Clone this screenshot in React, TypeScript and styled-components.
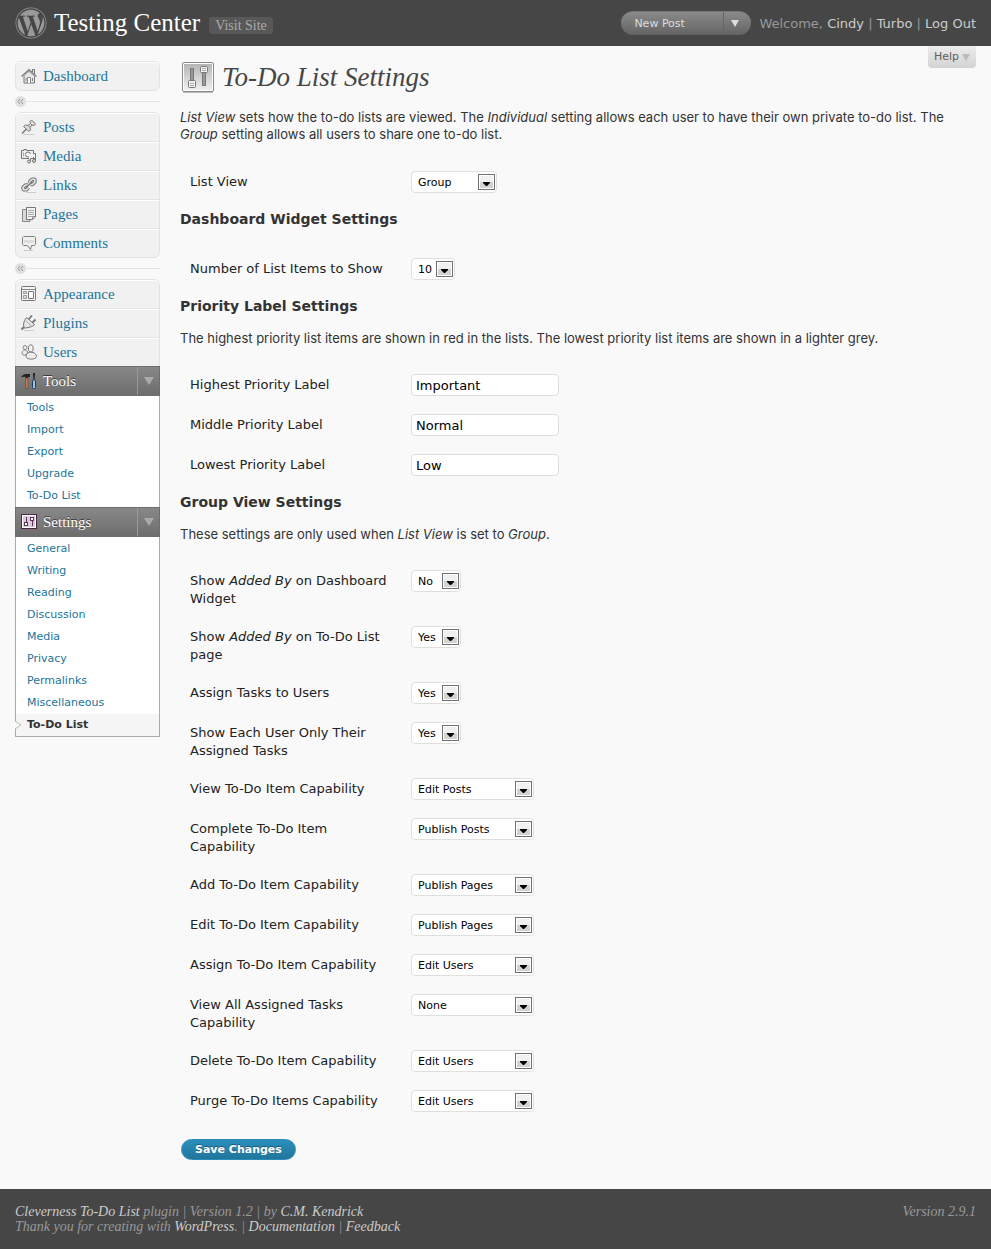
import React, { useId } from "react";
import type { ReactNode } from "react";
import styled, { createGlobalStyle } from "styled-components";
import { FaWordpress } from "react-icons/fa";

const sans = `Verdana, "DejaVu Sans", sans-serif`;
const proseSans = `Inter, "DejaVu Sans", sans-serif`;
const serif = `Georgia, "Liberation Serif", serif`;

const GlobalStyle = createGlobalStyle`
  * { box-sizing: border-box; }
  body { margin: 0; background: #f9f9f9; color: #333; font: 13px/18px ${sans}; }
  a { text-decoration: none; }
  ul { list-style: none; margin: 0; padding: 0; }
`;

/* ---------- Header ---------- */

const Header = styled.header`
  display: flex;
  align-items: center;
  height: 46px;
  padding: 0 15px;
  background: #464646;
`;
const Logo = styled(FaWordpress)`
  flex: none;
  width: 32px;
  height: 32px;
  color: #999;
`;
const SiteTitle = styled.h1`
  margin: 0 9px 0 7px;
  font: 25px/30px ${serif};
  white-space: nowrap;
  a { color: #fff; }
`;
const VisitLink = styled.a`
  margin-top: 4px;
  padding: 0 6px;
  border-radius: 3px;
  background: #585858;
  color: #aaa;
  font: 14px/17px ${serif};
  white-space: nowrap;
`;
const Shortcut = styled.div`
  display: flex;
  flex: none;
  margin-left: auto;
  width: 130px;
  height: 24px;
  border-top: 1px solid #777;
  border-radius: 12px;
  overflow: hidden;
  background: linear-gradient(#8a8a8a, #636363);
`;
const ShortcutLink = styled.a`
  flex: 1;
  padding-left: 13px;
  color: #ddd;
  font-size: 11px;
  line-height: 23px;
`;
const ShortcutToggle = styled.button`
  width: 28px;
  padding: 0 6px 0 0;
  border: 0;
  border-left: 1px solid #666;
  background: none;
  line-height: 0;
`;
const UserInfo = styled.p`
  margin: 1px 0 0 8px;
  color: #999;
  white-space: nowrap;
  a { color: #ccc; }
`;

/* ---------- Sidebar ---------- */

const Body = styled.div`
  display: flex;
  align-items: flex-start;
  gap: 20px;
  padding: 0 15px;
`;
const Sidebar = styled.nav`
  flex: 0 0 145px;
  padding-top: 15px;
`;
const MenuGroup = styled.ul`
  border: 1px solid #e3e3e3;
  border-radius: 6px;
  background: #f1f1f1;
`;
const MenuItem = styled.li`
  & + & { border-top: 1px solid #e3e3e3; }
`;
const MenuLink = styled.a`
  display: flex;
  align-items: center;
  gap: 6px;
  height: 28px;
  padding-left: 5px;
  box-shadow: inset 0 1px 0 #fff;
  border-radius: 5px 5px 0 0;
  color: #21759b;
  font: 15px/28px ${serif};
  ${MenuItem} + ${MenuItem} > & { border-radius: 0; }
`;
const OpenItem = styled.li`
  margin: 0 -1px;
  &:last-child { margin-bottom: -1px; }
`;
const OpenHead = styled.div`
  display: flex;
  height: 30px;
  border: 1px solid #6d6d6d;
  background: linear-gradient(#888, #6d6d6d);
`;
const OpenLink = styled.a`
  display: flex;
  flex: 1;
  align-items: center;
  gap: 6px;
  padding-left: 5px;
  color: #fff;
  font: 15px/28px ${serif};
  text-shadow: 0 -1px 0 #333;
`;
const FoldButton = styled.button`
  width: 22px;
  padding: 0;
  border: 0;
  border-left: 1px solid #999;
  background: none;
  line-height: 0;
`;
const SubMenu = styled.ul`
  padding-top: 1px;
  border: solid #aaa;
  border-width: 0 1px;
  background: #fff;
  ${OpenItem}:last-child > & { border-bottom-width: 1px; }
`;
const SubItem = styled.li<{ $current?: boolean }>`
  position: relative;
  background: ${(p) => (p.$current ? "#f5f5f5" : "none")};
  a {
    display: block;
    padding-left: 11px;
    color: ${(p) => (p.$current ? "#333" : "#21759b")};
    font-size: 11px;
    font-weight: ${(p) => (p.$current ? "bold" : "normal")};
    line-height: 22px;
  }
`;
const CurrentMark = styled.svg`
  position: absolute;
  left: -1px;
  top: 6px;
`;
const SeparatorRow = styled.div`
  display: flex;
  align-items: center;
  height: 21px;
  &::after { content: ""; flex: 1; border-top: 1px solid #e3e3e3; }
`;
const CollapseButton = styled.button`
  width: 11px;
  height: 11px;
  padding: 0;
  border: 0;
  border-radius: 50%;
  background: #e0e0e0;
  line-height: 0;
`;

/* ---------- Content ---------- */

const Content = styled.main`
  flex: 1;
  min-width: 0;
  padding-bottom: 29px;
`;
const HelpTab = styled.button`
  display: flex;
  align-items: center;
  gap: 3px;
  height: 22px;
  margin-left: auto;
  padding: 0 6px;
  border: 0;
  border-radius: 0 0 4px 4px;
  background: linear-gradient(#ececec, #d3d3d3);
  color: #606060;
  font: 11px/22px ${sans};
`;
const TitleRow = styled.div`
  display: flex;
  align-items: center;
  gap: 8px;
  margin: -8px 0 14px 2px;
`;
const PageTitle = styled.h2`
  margin: 0;
  color: #464646;
  font: italic 27px/35px ${serif};
`;
const Intro = styled.p`
  margin: 0 0 19px;
  font-family: ${proseSans};
  line-height: 17px;
`;
const SectionTitle = styled.h3`
  margin: 7px 0 0;
  font-size: 14px;
  line-height: 20px;
`;
const Note = styled.p`
  margin: 13px 0 0;
  font-family: ${proseSans};
`;
const Fields = styled.div<{ $gap: number }>`
  margin-top: ${(p) => p.$gap}px;
`;
const FieldRow = styled.div`
  display: grid;
  grid-template-columns: 221px 1fr;
  column-gap: 10px;
  align-items: start;
  min-height: 40px;
`;
const FieldLabel = styled.label`
  padding: 11px 10px 9px;
  color: #222;
`;
const TextInput = styled.input`
  width: 148px;
  height: 22px;
  margin-top: 9px;
  padding: 0 4px;
  border: 1px solid #dfdfdf;
  border-radius: 4px;
  background: #fff;
  color: #000;
  font: 13px/18px ${sans};
`;
const SelectBox = styled.div<{ $width: number }>`
  position: relative;
  width: ${(p) => p.$width}px;
  height: 22px;
  margin-top: 9px;
`;
const NativeSelect = styled.select`
  display: block;
  appearance: none;
  width: 100%;
  height: 100%;
  padding: 1px 0 0 6px;
  border: 1px solid #dfdfdf;
  border-radius: 4px;
  background: #fff;
  color: #000;
  font: 11px/19px ${sans};
`;
const SelectArrow = styled.svg`
  position: absolute;
  top: 3px;
  right: 2px;
  pointer-events: none;
`;
const SaveButton = styled.button`
  display: block;
  height: 21px;
  margin: 18px 0 0 1px;
  padding: 0 13px;
  border: 1px solid #298cba;
  border-radius: 11px;
  background: linear-gradient(#2a8fbd, #21759b);
  color: #fff;
  font: bold 11px/19px ${sans};
  text-shadow: 0 -1px 0 #1a5a78;
`;

/* ---------- Footer ---------- */

const Footer = styled.footer`
  display: flex;
  justify-content: space-between;
  min-height: 60px;
  padding: 15px 15px 0;
  background: #464646;
  color: #999;
  font: italic 14px/15px ${serif};
  p { margin: 0; }
  a { color: #ccc; }
`;

/* ---------- Icons ---------- */

const iconShapes: Record<string, ReactNode> = {
  dashboard: (
    <>
      <path d="M3 8V15H13.500V8L8 3Z" fill="#e8e8e8" stroke="#777" />
      <path d="M.5 8.500 8 1.500 15.500 8.500" fill="none" stroke="#777" strokeWidth="1.200" />
      <path d="M2.500 8.500 8 3.500 13.500 8.500" fill="none" stroke="#bbb" />
      <path d="M11.500 4V1.500H13.500V6" fill="#ddd" stroke="#777" />
      <path d="M6.500 15V9.500H9.500V15M5 10V13M11.500 10V13" fill="#fff" stroke="#888" />
    </>
  ),
  posts: (
    <>
      <path d="M2 15.500H13" stroke="#ccc" />
      <path d="M1 14.500 6 9.500" stroke="#777" strokeWidth="1.500" />
      <path d="M2.500 7.500 4.500 6 7 6.500 9.500 4.500 9 2.500 10.500 1 14.500 5 13 6.500 11 6 9 8.500 9.500 11 8 12.500Z" fill="#ddd" stroke="#777" />
      <path d="M7 6.500 9 8.500M9.500 4.500 11 6" stroke="#888" />
    </>
  ),
  media: (
    <>
      <path d="M.5 2.500H3V1.500H5.500V2.500H12.500V10.500H.5Z" fill="#eee" stroke="#777" />
      <circle cx="7" cy="6.500" r="2.500" fill="#fff" stroke="#777" />
      <path d="M2.500 4.500V8.500" stroke="#aaa" />
      <path d="M9.500 14V7.500H14.500V13" fill="none" stroke="#f1f1f1" strokeWidth="3" />
      <path d="M9.500 14V10.500M14.500 13V5.500H12.500M9.500 10.500H14.500" fill="none" stroke="#777" />
      <circle cx="8" cy="13.500" r="1.500" fill="#ddd" stroke="#777" />
      <circle cx="13" cy="13" r="1.500" fill="#ddd" stroke="#777" />
    </>
  ),
  links: (
    <>
      <path d="M5 15.500H15" stroke="#ccc" />
      <g fill="none" strokeLinejoin="round">
        <g stroke="#777" strokeWidth="3.600">
          <path d="M7.500 10.500 5.500 12.800 2.500 12.800 2 10.500 4.500 8 7 8" />
          <path d="M8.500 6 8.800 4.500 11 2.200 13.800 2.200 14 5 11.500 7.500 9.500 7.500" />
        </g>
        <g stroke="#e4e4e4" strokeWidth="1.600">
          <path d="M7.500 10.500 5.500 12.800 2.500 12.800 2 10.500 4.500 8 7 8" />
          <path d="M8.500 6 8.800 4.500 11 2.200 13.800 2.200 14 5 11.500 7.500 9.500 7.500" />
        </g>
      </g>
      <path d="M5 10.500 11 5" stroke="#777" strokeWidth="1.500" />
    </>
  ),
  pages: (
    <>
      <path d="M1.500 3.500H9V15.500H1.500Z" fill="#d8d8d8" stroke="#888" />
      <path d="M5.500 1.500H14.500V11L11.500 13.500H5.500Z" fill="#f3f3f3" stroke="#777" />
      <path d="M7 4.500H13M7 6.500H13M7 8.500H13M7 10.500H11" stroke="#aaa" />
      <path d="M14.500 10.500H11.500V13.500" fill="none" stroke="#888" />
    </>
  ),
  comments: (
    <>
      <path d="M3 15.500H12" stroke="#ccc" />
      <path d="M2.500 1.500H13.500L14.500 2.500V9.500L13.500 10.500H10.500L9.500 14.500 6.500 10.500H2.500L1.500 9.500V2.500Z" fill="#f0f0f0" stroke="#808080" />
      <path d="M3 5H13V8H3Z" fill="#ddd" />
    </>
  ),
  appearance: (
    <>
      <rect x=".5" y=".5" width="14" height="14" rx="1" fill="#f4f4f4" stroke="#777" />
      <path d="M1 3.500H14" stroke="#888" />
      <path d="M2.500 5.500H5.500V7.500H2.500ZM2.500 9.500H5.500V12.500H2.500Z" fill="#ddd" stroke="#999" />
      <path d="M7.500 5.500H12.500V12.500H7.500Z" fill="#fff" stroke="#777" />
    </>
  ),
  plugins: (
    <>
      <path d="M3 15.500H13" stroke="#ccc" />
      <path d="M.5 14.500 3 12" stroke="#777" strokeWidth="2" />
      <path d="M7.500 4.500 11 .5M11 8 14.500 4.500" stroke="#777" strokeWidth="1.800" />
      <path d="M5.500 2.500 13.500 9.500 11 11.500 6 12.800 3 13 2.500 9 3.500 5.500Z" fill="#e8e8e8" stroke="#777" />
      <path d="M4.500 5.500 10.500 11" stroke="#aaa" />
    </>
  ),
  users: (
    <>
      <circle cx="4" cy="3.500" r="2" fill="#eee" stroke="#888" />
      <path d="M1 9.500C1 6.500 3 5.800 4.500 6.200L7 8 5 11H2Z" fill="#eee" stroke="#888" />
      <path d="M7.500 3.500C7.500 0 12 0 12 3.500V6C12 8.500 7.500 8.500 7.500 6Z" fill="#f4f4f4" stroke="#777" />
      <path d="M5 12.500C5 10 7 8 9.700 8.200 13 8 15.500 10 15.500 12.500 15 16 5.500 16 5 12.500Z" fill="#eee" stroke="#777" />
    </>
  ),
  tools: (
    <>
      <path d="M0 5C1 2 3 1 5 1H9V4H7V5H4.500V4C3 3.500 1.500 4 0 5Z" fill="#222" />
      <path d="M4.500 5H7V15.500H4.500Z" fill="#c87c4e" stroke="#5b2f17" strokeWidth=".5" />
      <path d="M12 0H14L13.500 7H12.500Z" fill="#222" />
      <rect x="11.500" y="7" width="3" height="8.500" rx="1" fill="#9fc3e8" stroke="#223d5c" />
    </>
  ),
  settings: (
    <>
      <rect x=".5" y=".5" width="15" height="14" fill="#dccbdb" stroke="#4b2848" />
      <rect x="1.500" y="1.500" width="13" height="12" fill="none" stroke="#fff" />
      <path d="M5.500 3V11M11.500 4V12" stroke="#5a3357" />
      <path d="M3 8H7V12H3ZM9 3H13V7H9Z" fill="#5a3357" />
      <path d="M4 9H6V11H4ZM10 4H12V6H10Z" fill="#fff" />
    </>
  ),
};

function Icon({ name }: { name: string }) {
  return <svg width="16" height="16" viewBox="0 0 16 16" aria-hidden="true">{iconShapes[name]}</svg>;
}

function Triangle({ color, width = 9, height = 7 }: { color: string; width?: number; height?: number }) {
  return (
    <svg width={width} height={height} aria-hidden="true">
      <path d={`M0 0H${width}L${width / 2} ${height}Z`} fill={color} />
    </svg>
  );
}

function TitleIcon() {
  return (
    <svg width="32" height="32" viewBox="0 0 32 32" aria-hidden="true">
      <defs>
        <linearGradient id="panel" x1="0" y1="0" x2="0" y2="1">
          <stop offset="0" stopColor="#b5b5b5" />
          <stop offset="1" stopColor="#eee" />
        </linearGradient>
      </defs>
      <rect x=".5" y=".5" width="31" height="29" rx="1.500" fill="#fff" stroke="#888" />
      <rect x="2" y="2" width="28" height="26" fill="url(#panel)" />
      <path d="M1 30.500H31" stroke="#bbb" />
      <rect x="8.500" y="6.500" width="3" height="14" fill="#999" stroke="#777" />
      <rect x="20.500" y="10.500" width="3" height="13" fill="#999" stroke="#777" />
      <rect x="6.500" y="18.500" width="7" height="7" rx="1" fill="#f2f2f2" stroke="#777" />
      <rect x="18.500" y="4.500" width="7" height="6" rx="1" fill="#f2f2f2" stroke="#777" />
      <path d="M8 21.500H12M8 23.500H12M20 6.500H24M20 8.500H24" stroke="#aaa" />
    </svg>
  );
}

/* ---------- Building blocks ---------- */

function Separator() {
  return (
    <SeparatorRow>
      <CollapseButton aria-label="Collapse menu">
        <svg width="7" height="5" viewBox="0 0 7 5">
          <path d="M3 0 1 2.500 3 5M6 0 4 2.500 6 5" fill="none" stroke="#999" />
        </svg>
      </CollapseButton>
    </SeparatorRow>
  );
}

function MenuEntry({ icon, children }: { icon: string; children: ReactNode }) {
  return (
    <MenuItem>
      <MenuLink href={`#${icon}`}><Icon name={icon} />{children}</MenuLink>
    </MenuItem>
  );
}

function OpenMenu({ icon, title, items, current }: { icon: string; title: string; items: string[]; current?: string }) {
  return (
    <OpenItem>
      <OpenHead>
        <OpenLink href={`#${icon}`}><Icon name={icon} />{title}</OpenLink>
        <FoldButton aria-label={`Toggle ${title}`}><Triangle color="#aaa" width={10} height={8} /></FoldButton>
      </OpenHead>
      <SubMenu>
        {items.map((item) => (
          <SubItem key={item} $current={item === current}>
            {item === current && (
              <CurrentMark width="7" height="10">
                <path d="M0 1V9L6 5Z" fill="#f9f9f9" />
                <path d="M0 1 6 5 0 9" fill="none" stroke="#bbb" />
              </CurrentMark>
            )}
            <a href={`#${icon}`}>{item}</a>
          </SubItem>
        ))}
      </SubMenu>
    </OpenItem>
  );
}

function SelectField({ label, value, width }: { label: ReactNode; value: string; width: number }) {
  const id = useId();
  return (
    <FieldRow>
      <FieldLabel htmlFor={id}>{label}</FieldLabel>
      <SelectBox $width={width}>
        <NativeSelect id={id} defaultValue={value}>
          <option>{value}</option>
        </NativeSelect>
        <SelectArrow width="17" height="16" aria-hidden="true">
          <rect x=".5" y=".5" width="16" height="15" fill="#fff" stroke="#707070" />
          <rect x="2" y="2" width="13" height="6" fill="#f0f0f0" />
          <rect x="2" y="8" width="13" height="6" fill="#d2d2d2" />
          <path d="M5 8H12V9L9 12H8L5 9Z" fill="#000" />
        </SelectArrow>
      </SelectBox>
    </FieldRow>
  );
}

function TextField({ label, value }: { label: string; value: string }) {
  const id = useId();
  return (
    <FieldRow>
      <FieldLabel htmlFor={id}>{label}</FieldLabel>
      <TextInput id={id} type="text" defaultValue={value} />
    </FieldRow>
  );
}

const capabilities: [string, string][] = [
  ["View To-Do Item Capability", "Edit Posts"],
  ["Complete To-Do Item Capability", "Publish Posts"],
  ["Add To-Do Item Capability", "Publish Pages"],
  ["Edit To-Do Item Capability", "Publish Pages"],
  ["Assign To-Do Item Capability", "Edit Users"],
  ["View All Assigned Tasks Capability", "None"],
  ["Delete To-Do Item Capability", "Edit Users"],
  ["Purge To-Do Items Capability", "Edit Users"],
];

export default function App() {
  return (
    <>
      <GlobalStyle />
      <Header>
        <Logo />
        <SiteTitle><a href="#site">Testing Center</a></SiteTitle>
        <VisitLink href="#visit">Visit Site</VisitLink>
        <Shortcut>
          <ShortcutLink href="#new">New Post</ShortcutLink>
          <ShortcutToggle aria-label="More actions"><Triangle color="#ddd" width={8} /></ShortcutToggle>
        </Shortcut>
        <UserInfo>
          Welcome, <a href="#profile">Cindy</a> | <a href="#turbo">Turbo</a> | <a href="#logout">Log Out</a>
        </UserInfo>
      </Header>
      <Body>
        <Sidebar>
          <MenuGroup>
            <MenuEntry icon="dashboard">Dashboard</MenuEntry>
          </MenuGroup>
          <Separator />
          <MenuGroup>
            <MenuEntry icon="posts">Posts</MenuEntry>
            <MenuEntry icon="media">Media</MenuEntry>
            <MenuEntry icon="links">Links</MenuEntry>
            <MenuEntry icon="pages">Pages</MenuEntry>
            <MenuEntry icon="comments">Comments</MenuEntry>
          </MenuGroup>
          <Separator />
          <MenuGroup>
            <MenuEntry icon="appearance">Appearance</MenuEntry>
            <MenuEntry icon="plugins">Plugins</MenuEntry>
            <MenuEntry icon="users">Users</MenuEntry>
            <OpenMenu icon="tools" title="Tools" items={["Tools", "Import", "Export", "Upgrade", "To-Do List"]} />
            <OpenMenu
              icon="settings"
              title="Settings"
              items={["General", "Writing", "Reading", "Discussion", "Media", "Privacy", "Permalinks", "Miscellaneous", "To-Do List"]}
              current="To-Do List"
            />
          </MenuGroup>
        </Sidebar>
        <Content>
          <HelpTab>Help <Triangle color="#bbb" width={8} /></HelpTab>
          <TitleRow>
            <TitleIcon />
            <PageTitle>To-Do List Settings</PageTitle>
          </TitleRow>
          <Intro>
            <em>List View</em> sets how the to-do lists are viewed. The <em>Individual</em> setting allows each user to
            have their own private to-do list. The <em>Group</em> setting allows all users to share one to-do list.
          </Intro>
          <SelectField label="List View" value="Group" width={86} />

          <SectionTitle>Dashboard Widget Settings</SectionTitle>
          <Fields $gap={20}>
            <SelectField label="Number of List Items to Show" value="10" width={44} />
          </Fields>

          <SectionTitle>Priority Label Settings</SectionTitle>
          <Note>
            The highest priority list items are shown in red in the lists. The lowest priority list items are shown in a
            lighter grey.
          </Note>
          <Fields $gap={18}>
            <TextField label="Highest Priority Label" value="Important" />
            <TextField label="Middle Priority Label" value="Normal" />
            <TextField label="Lowest Priority Label" value="Low" />
          </Fields>

          <SectionTitle>Group View Settings</SectionTitle>
          <Note>
            These settings are only used when <em>List View</em> is set to <em>Group</em>.
          </Note>
          <Fields $gap={18}>
            <SelectField label={<>Show <em>Added By</em> on Dashboard Widget</>} value="No" width={50} />
            <SelectField label={<>Show <em>Added By</em> on To-Do List page</>} value="Yes" width={50} />
            <SelectField label="Assign Tasks to Users" value="Yes" width={50} />
            <SelectField label="Show Each User Only Their Assigned Tasks" value="Yes" width={50} />
            {capabilities.map(([label, value]) => (
              <SelectField key={label} label={label} value={value} width={123} />
            ))}
          </Fields>
          <SaveButton>Save Changes</SaveButton>
        </Content>
      </Body>
      <Footer>
        <p>
          <a href="#plugin">Cleverness To-Do List</a> plugin | Version 1.2 | by <a href="#author">C.M. Kendrick</a>
          <br />
          Thank you for creating with <a href="#wp">WordPress</a>. | <a href="#docs">Documentation</a> |{" "}
          <a href="#feedback">Feedback</a>
        </p>
        <p>Version 2.9.1</p>
      </Footer>
    </>
  );
}
